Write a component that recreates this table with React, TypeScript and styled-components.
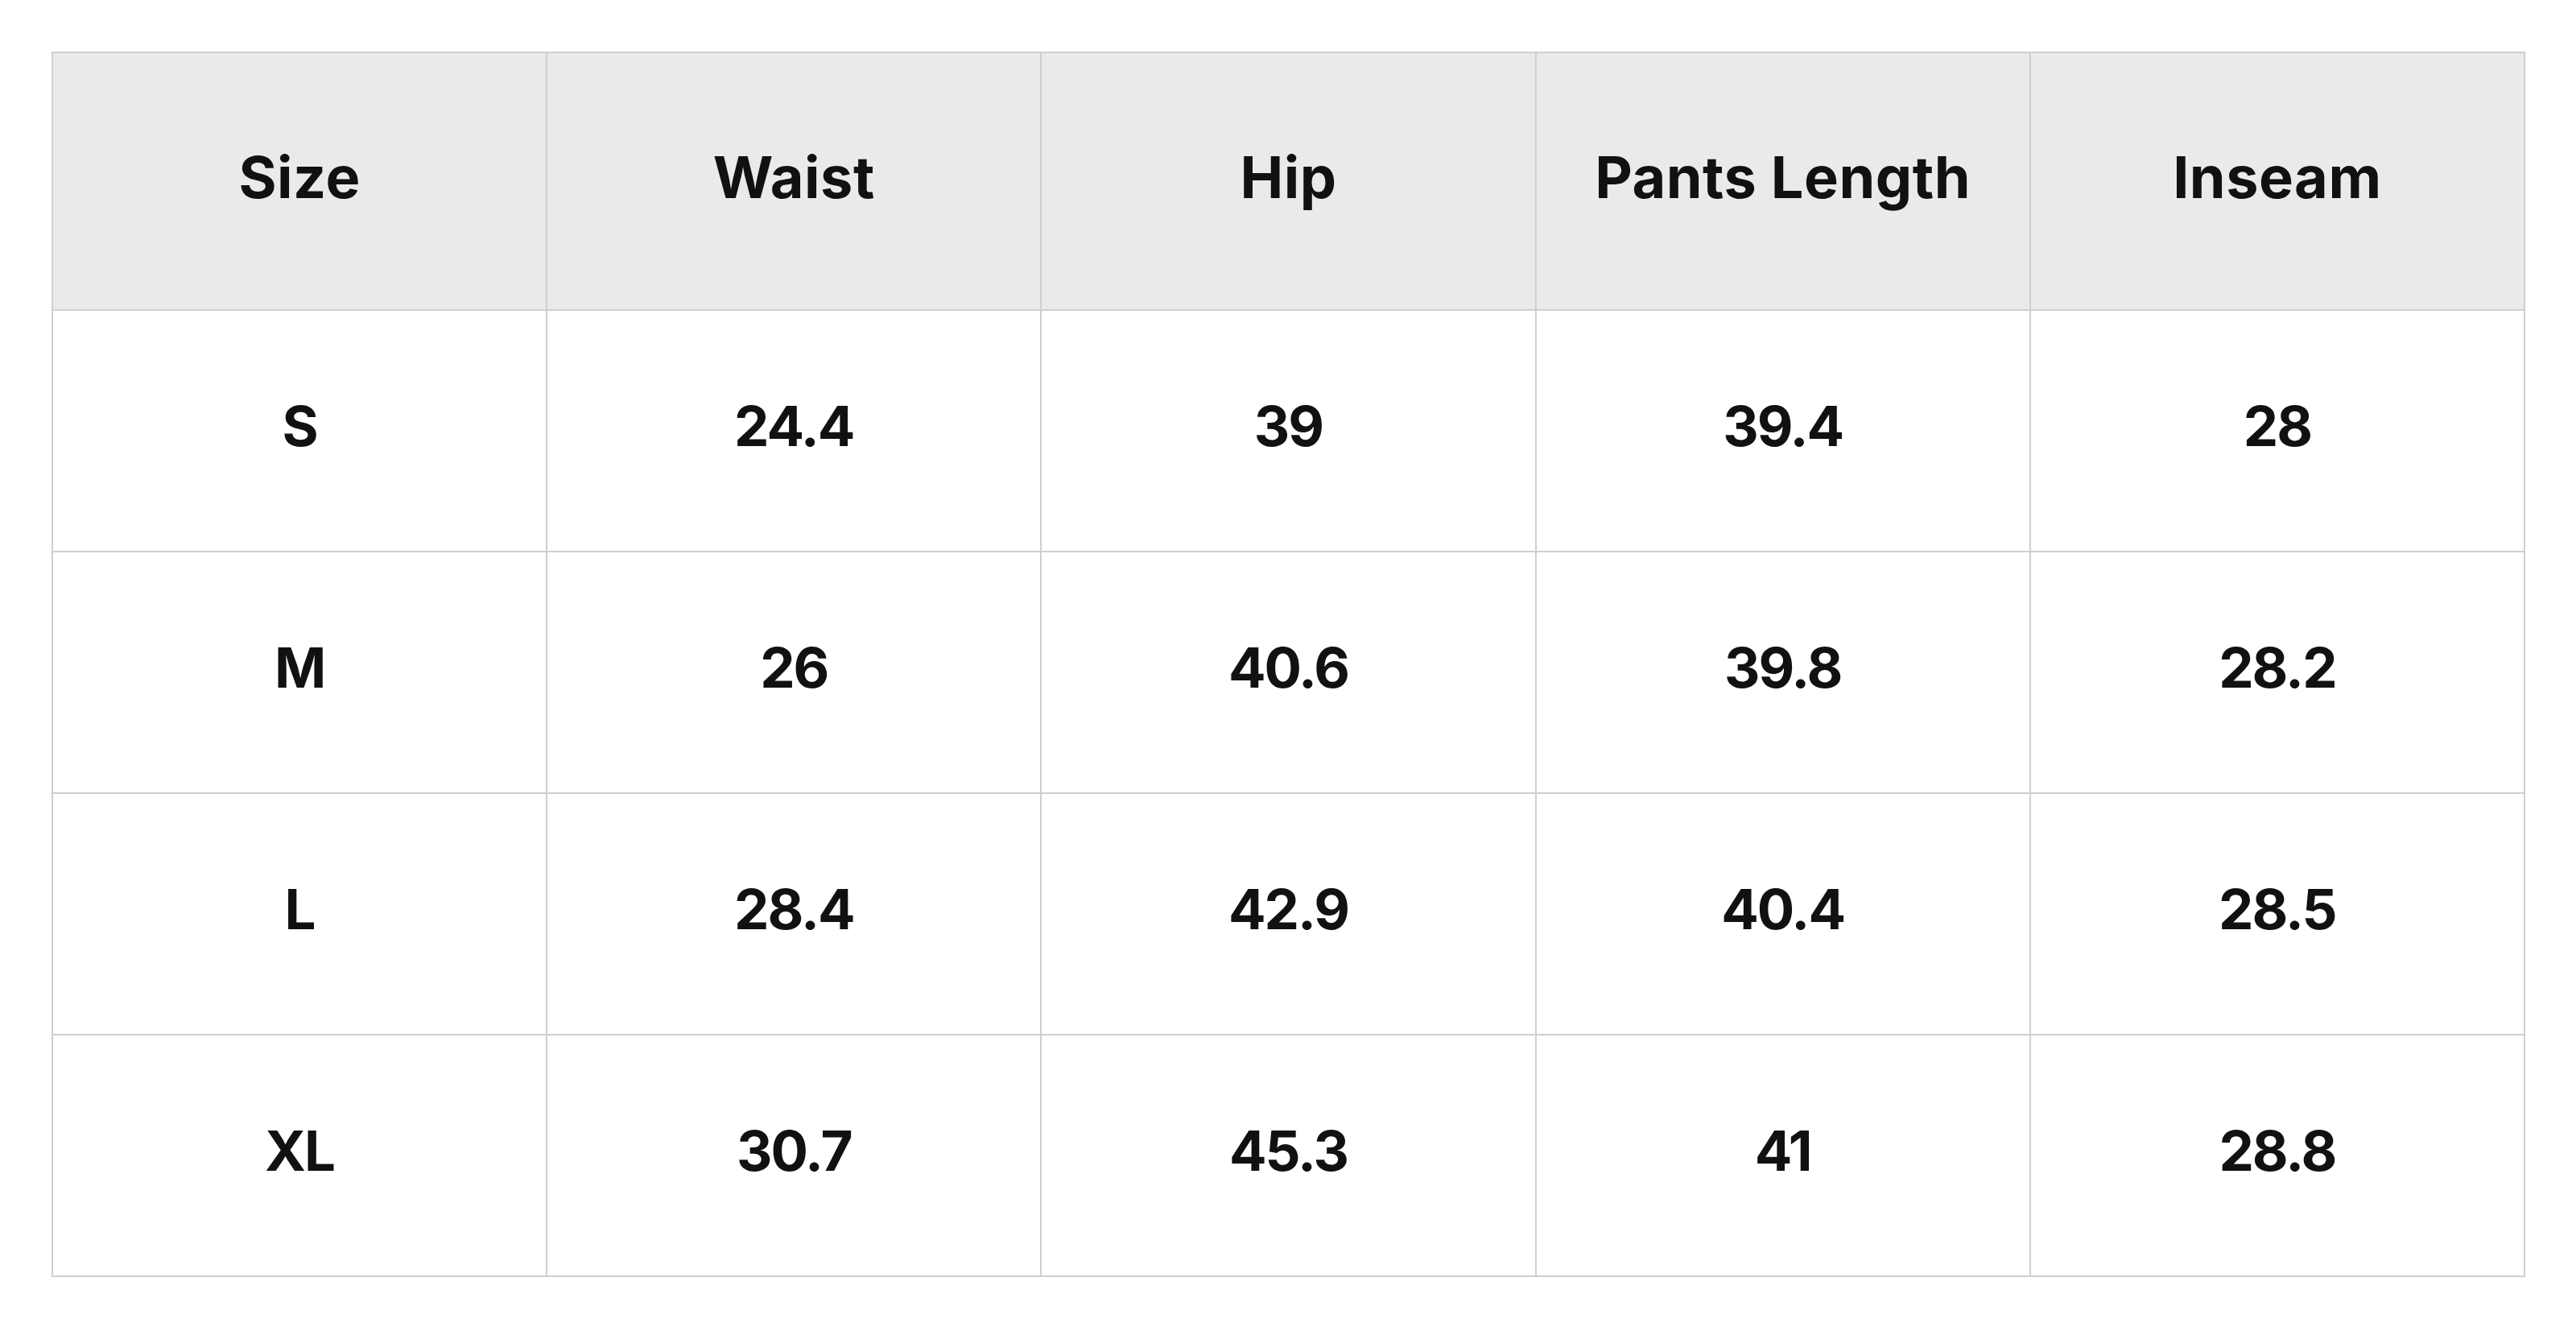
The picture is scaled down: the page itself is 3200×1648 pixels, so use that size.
import React from 'react';
import styled, { createGlobalStyle } from 'styled-components';

const GlobalStyle = createGlobalStyle`
  html, body {
    margin: 0;
    padding: 0;
    background: #ffffff;
  }
`;

const Page = styled.div`
  padding: 64px 63px 0 64px;
  font-family: Inter, 'Noto Sans', sans-serif;
  color: #111111;
`;

const Table = styled.table`
  width: 100%;
  border-collapse: collapse;
  table-layout: fixed;
`;

const HeadCell = styled.th`
  height: 306px;
  background: #eaeaea;
  border: 2px solid #cfcfcf;
  font-size: 72px;
  font-weight: 700;
  text-align: center;
  vertical-align: middle;
  padding: 0 0 12px 0;
  letter-spacing: 0.5px;
`;

const Cell = styled.td`
  height: 286px;
  border: 2px solid #cfcfcf;
  font-size: 69px;
  font-weight: 700;
  text-align: center;
  vertical-align: middle;
  padding: 0 0 12px 0;
  letter-spacing: -2px;
`;

const columns = ['Size', 'Waist', 'Hip', 'Pants Length', 'Inseam'];

const rows = [
  ['S', '24.4', '39', '39.4', '28'],
  ['M', '26', '40.6', '39.8', '28.2'],
  ['L', '28.4', '42.9', '40.4', '28.5'],
  ['XL', '30.7', '45.3', '41', '28.8'],
];

const App: React.FC = () => {
  return (
    <>
      <GlobalStyle />
      <Page>
        <Table>
          <thead>
            <tr>
              {columns.map((c) => (
                <HeadCell key={c}>{c}</HeadCell>
              ))}
            </tr>
          </thead>
          <tbody>
            {rows.map((r) => (
              <tr key={r[0]}>
                {r.map((v, i) => (
                  <Cell key={i}>{v}</Cell>
                ))}
              </tr>
            ))}
          </tbody>
        </Table>
      </Page>
    </>
  );
};

export default App;
